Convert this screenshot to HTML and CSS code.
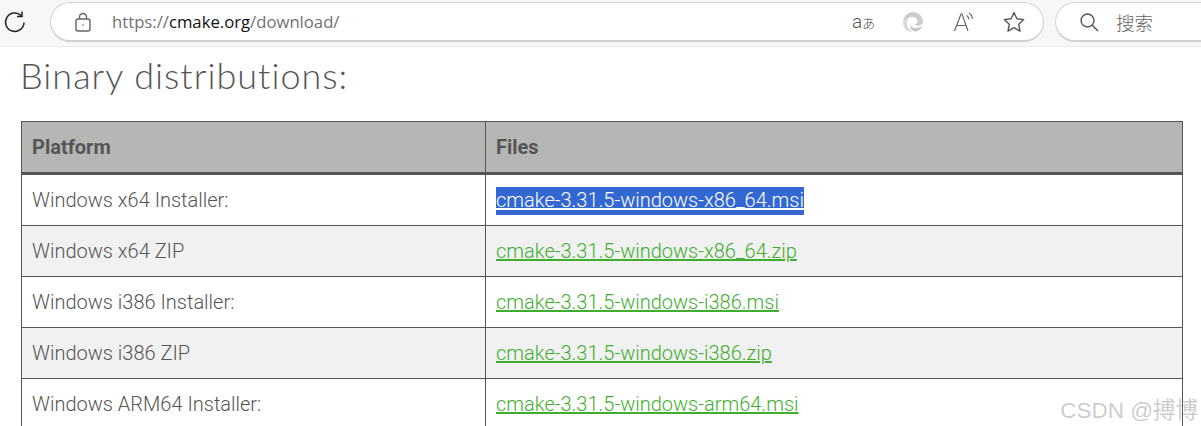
FILE: index.html
```html
<!DOCTYPE html>
<html lang="en">
<head>
    <meta charset="UTF-8">
    <meta name="viewport" content="width=device-width, initial-scale=1.0">
    <title>Download CMake</title>
    <link rel="stylesheet" href="styles.css">
</head>
<body>
    <div class="toolbar">
        <svg class="reload" width="24" height="24" viewBox="0 0 24 24" fill="none" stroke="#222" stroke-width="1.5">
            <path d="M18.2 5.6A9.2 9.2 0 1 0 21 12.5"/>
            <path d="M19 1.5V6.500H14"/>
        </svg>
        <div class="address-bar">
            <svg class="lock" width="18" height="20" viewBox="0 0 18 20" fill="none" stroke="#666" stroke-width="1.400">
                <rect x="2" y="7" width="14" height="12" rx="2"/>
                <path d="M5.500 7V5a3.500 3.500 0 0 1 7 0v2"/>
                <circle cx="9" cy="13" r="0.8" fill="#666" stroke="none"/>
            </svg>
            <div class="url"><span class="url-dim">https://</span><span class="url-host">cmake.org</span><span class="url-dim">/download/</span></div>
            <div class="address-icons">
                <div class="translate">a<span class="translate-kana">あ</span></div>
                <svg width="22" height="22" viewBox="0 0 22 22">
                    <path fill="#c9cdcd" d="M11 1a10 10 0 0 1 10 9.600c0 2.600-2.400 4.200-5 4.200-1.500 0-2.800-.5-3.300-1.200 2-.6 2.800-1.800 2.800-3.100C15.500 8 13.400 6 10.300 6 6.800 6 3 8 1 11.500 1.400 5.600 5.600 1 11 1z"/>
                    <path fill="#d7dada" d="M1 12c1-2.800 3.600-4.600 6.300-4.600-1.500 1-2.300 2.800-2.300 4.800 0 4 3.200 8.300 7.500 8.800C6 21.500 1.500 17.500 1 12z"/>
                    <path fill="#bfc4c4" d="M20.500 14.800A10 10 0 0 1 14 20.600c-3-.3-6-3-6.200-6.300 1.500 2.500 4.600 3.300 7.400 2.900 2-.3 3.800-1.200 5.300-2.400z"/>
                </svg>
                <svg class="read-aloud" width="24" height="24" viewBox="0 0 24 24" fill="none" stroke="#666" stroke-width="1.200">
                    <path d="M2.500 21 9 4h1l6 17M5 15.500h9.500"/>
                    <path d="M14.500 5.500c1.500.8 2.300 2.200 2.300 3.800M17 3c2.200 1.200 3.300 3.300 3.300 6"/>
                </svg>
                <svg width="24" height="24" viewBox="0 0 24 24" fill="none" stroke="#555" stroke-width="1.400" stroke-linejoin="round">
                    <path d="M12 2.500l2.900 6.300 6.800.8-5 4.700 1.300 6.800-6-3.400-6 3.400 1.300-6.800-5-4.700 6.800-.8z"/>
                </svg>
            </div>
        </div>
        <div class="search-bar">
            <svg width="20" height="20" viewBox="0 0 20 20" fill="none" stroke="#555" stroke-width="1.400">
                <circle cx="8.500" cy="8.500" r="6.500"/>
                <path d="M13.300 13.300 19 19"/>
            </svg>
            <span class="search-text">搜索</span>
        </div>
    </div>

    <div class="content">
        <h2>Binary distributions:</h2>
        <table class="downloads">
            <thead>
                <tr><th>Platform</th><th>Files</th></tr>
            </thead>
            <tbody>
                <tr><td>Windows x64 Installer:</td><td><a href="#" class="selected">cmake-3.31.5-windows-x86_64.msi</a></td></tr>
                <tr><td>Windows x64 ZIP</td><td><a href="#">cmake-3.31.5-windows-x86_64.zip</a></td></tr>
                <tr><td>Windows i386 Installer:</td><td><a href="#">cmake-3.31.5-windows-i386.msi</a></td></tr>
                <tr><td>Windows i386 ZIP</td><td><a href="#">cmake-3.31.5-windows-i386.zip</a></td></tr>
                <tr><td>Windows ARM64 Installer:</td><td><a href="#">cmake-3.31.5-windows-arm64.msi</a></td></tr>
            </tbody>
        </table>
    </div>

    <div class="watermark">CSDN @搏博</div>
</body>
</html>
```

FILE: styles.css
```css
html, body {
    height: 100%;
}
body {
    margin: 0;
    height: 426px;
    overflow: hidden;
    background-color: #fff;
    font-family: 'Roboto', 'Noto Sans CJK SC', sans-serif;
    position: relative;
}
.toolbar {
    display: flex;
    align-items: flex-start;
    height: 47px;
    box-sizing: border-box;
    background-color: #f7f7f7;
    border-bottom: 1px solid #ececec;
    padding-top: 2px;
}
.reload {
    flex-shrink: 0;
    margin: 8px 0 0 3px;
}
.address-bar {
    display: flex;
    flex-shrink: 0;
    align-items: center;
    width: 994px;
    height: 40px;
    box-sizing: border-box;
    margin-left: 23px;
    padding-left: 23px;
    background-color: #fff;
    border: 1px solid #d2d2d2;
    border-bottom-width: 2px;
    border-radius: 20px;
}
.url {
    margin-left: 20px;
    font-family: 'Open Sans', sans-serif;
    font-size: 16.7px;
    flex: 1;
}
.url-dim {
    color: #717171;
}
.url-host {
    color: #111;
}
.address-icons {
    display: flex;
    align-items: center;
    gap: 26px;
    padding-right: 17px;
}
.translate {
    font-size: 19px;
    font-weight: 300;
    color: #555;
    width: 24px;
    white-space: nowrap;
}
.translate-kana {
    font-size: 13px;
}
.read-aloud {
    margin-left: 2px;
}
.search-bar {
    display: flex;
    flex-shrink: 0;
    align-items: center;
    gap: 17px;
    width: 170px;
    height: 40px;
    box-sizing: border-box;
    margin-left: 11px;
    padding-left: 23px;
    background-color: #fff;
    border: 1px solid #d2d2d2;
    border-bottom-width: 2px;
    border-right: none;
    border-radius: 20px 0 0 20px;
}
.search-text {
    font-size: 18.500px;
    font-weight: 300;
    color: #666;
}
.content {
    padding: 0 18px 0 21px;
}
h2 {
    margin: 6px 0 24px;
    font-family: 'Lato', sans-serif;
    font-weight: 300;
    font-size: 36px;
    line-height: 44px;
    letter-spacing: 1px;
    color: #555;
    text-indent: -1px;
}
.downloads {
    width: 1162px;
    table-layout: fixed;
    border-collapse: collapse;
    font-size: 20px;
    color: #555;
}
.downloads th, .downloads td {
    border: 1px solid #555;
    padding: 0 10px;
    text-align: left;
}
.downloads th {
    height: 50px;
    background-color: #b6b6b4;
    border-bottom-width: 3px;
    font-weight: 700;
}
.downloads th:first-child {
    width: 443px;
}
.downloads td {
    height: 50px;
    font-weight: 300;
}
.downloads tbody tr:nth-child(even) td {
    background-color: #f1f1f1;
}
.downloads a {
    color: #3fae2f;
}
.downloads a.selected {
    padding: 1px 0 3px;
    background-color: #3367d1;
    color: #fff;
}
.watermark {
    position: absolute;
    right: 3px;
    top: 392px;
    font-family: 'Liberation Sans', 'Noto Sans CJK SC', sans-serif;
    font-size: 22.500px;
    color: rgba(130, 130, 130, 0.42);
}
```
